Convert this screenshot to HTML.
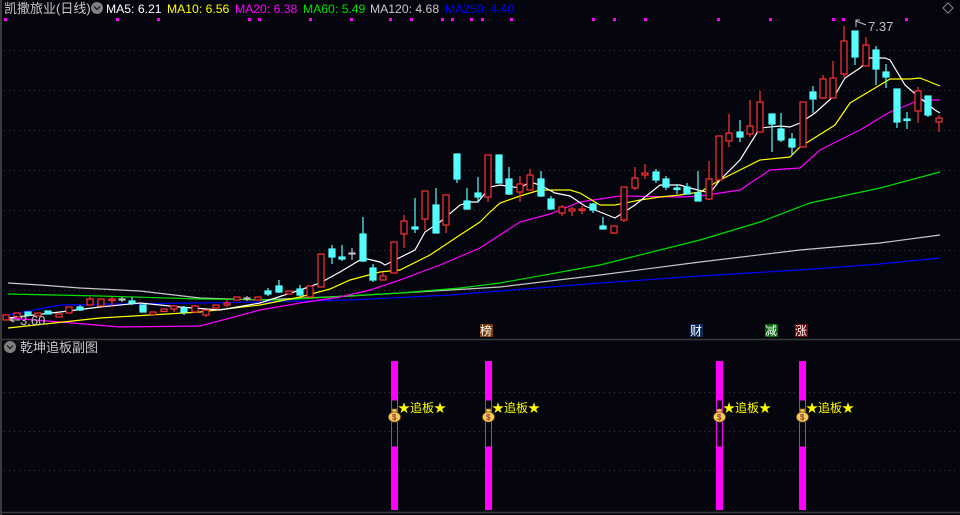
<!DOCTYPE html>
<html><head><meta charset="utf-8"><style>
html,body{margin:0;padding:0;background:#05050e;width:960px;height:515px;overflow:hidden}
svg{display:block}
text{font-family:"Liberation Sans","Noto Sans CJK SC",sans-serif}
</style></head><body>
<svg width="960" height="515" viewBox="0 0 960 515" xmlns="http://www.w3.org/2000/svg">
<rect width="960" height="515" fill="#05050e"/>
<line x1="1" y1="0" x2="1" y2="515" stroke="#3a3a3a" stroke-width="2"/>
<g stroke="#3c3c3c" stroke-dasharray="1,4" stroke-width="1">
<line x1="4" y1="50.5" x2="955" y2="50.5"/><line x1="4" y1="90.5" x2="955" y2="90.5"/><line x1="4" y1="130.5" x2="955" y2="130.5"/><line x1="4" y1="170.5" x2="955" y2="170.5"/><line x1="4" y1="210.5" x2="955" y2="210.5"/><line x1="4" y1="250.5" x2="955" y2="250.5"/><line x1="4" y1="290.5" x2="955" y2="290.5"/>
<line x1="4" y1="392.5" x2="955" y2="392.5"/><line x1="4" y1="431.5" x2="955" y2="431.5"/><line x1="4" y1="470.5" x2="955" y2="470.5"/>
</g>
<line x1="0" y1="339.5" x2="960" y2="339.5" stroke="#3a3a3a" stroke-width="1.5"/>
<line x1="0" y1="512.5" x2="960" y2="512.5" stroke="#3a3a3a" stroke-width="1.5"/>

<text x="4" y="13" font-size="13" fill="#c8c8c8">凯撒旅业(日线)</text>
<circle cx="97" cy="8" r="6" fill="#808080"/><path d="M94 6.5 L97 9.5 L100 6.5" stroke="#222" stroke-width="1.5" fill="none"/>
<text y="13" font-size="12.2"><tspan x="106" fill="#ffffff">MA5: 6.21</tspan><tspan x="167" fill="#ffff00">MA10: 6.56</tspan><tspan x="235" fill="#ff00ff">MA20: 6.38</tspan><tspan x="303" fill="#00e000">MA60: 5.49</tspan><tspan x="370" fill="#c8c8c8">MA120: 4.68</tspan><tspan x="445" fill="#0000ff">MA250: 4.40</tspan></text>
<path d="M948 3 L953 8 L948 13 L943 8 Z" stroke="#888" fill="none"/>

<g fill="#ff00ff">
<rect x="4" y="18" width="3" height="3"/><rect x="116" y="18" width="3" height="3"/><rect x="157" y="18" width="3" height="3"/><rect x="248" y="18" width="3" height="3"/><rect x="258" y="18" width="3" height="3"/><rect x="309" y="18" width="3" height="3"/><rect x="350" y="18" width="3" height="3"/><rect x="389" y="18" width="3" height="3"/><rect x="410" y="18" width="3" height="3"/><rect x="441" y="18" width="3" height="3"/><rect x="451" y="18" width="3" height="3"/><rect x="470" y="18" width="3" height="3"/><rect x="481" y="18" width="3" height="3"/><rect x="510" y="18" width="3" height="3"/><rect x="592" y="18" width="3" height="3"/><rect x="613" y="18" width="3" height="3"/><rect x="644" y="18" width="3" height="3"/><rect x="717" y="18" width="3" height="3"/><rect x="769" y="18" width="3" height="3"/><rect x="832" y="18" width="3" height="3"/><rect x="842" y="18" width="3" height="3"/><rect x="905" y="18" width="3" height="3"/>
</g>

<g fill="none" stroke-width="1.2">
<polyline stroke="#0000ff" points="8,315 60,305 120,304 200,303 260,302 350,300 450,295 600,283 700,276 800,270 880,264 940,258"/>
<polyline stroke="#c8c8c8" points="8,283 40,285 80,288 140,291 200,298 260,300 350,296 400,293 500,287 600,275 700,262 800,250 880,243 940,235"/>
<polyline stroke="#00e000" points="8,294 100,296 200,299 280,300 330,297 400,293 460,288 500,283 600,265 700,240 760,222 810,203 880,188 940,172"/>
<polyline stroke="#ff00ff" points="8,318 60,322 120,327 200,326 260,310 300,303 340,297 370,290 400,280 440,265 480,248 520,222 550,214 580,202 620,196 680,197 700,196 740,190 770,170 800,168 820,150 860,130 890,112 900,108 920,100 940,100"/>
<polyline stroke="#ffff00" points="8,328 100,318 200,312 260,305 300,297 330,289 350,280 380,272 400,270 430,255 460,235 480,222 490,212 500,203 520,196 540,190 570,190 580,193 600,205 615,205 640,200 660,197 680,195 700,192 720,180 760,160 790,157 800,147 835,125 850,103 870,91 890,79 910,79 920,78 940,86"/>
<polyline stroke="#ffffff" points="8,318 60,312 100,307 140,303 180,307 220,310 260,303 300,290 320,283 340,272 360,260 363,258 380,262 385,265 395,260 415,250 425,232 440,222 460,205 470,202 478,202 490,187 500,185 520,188 530,182 540,185 555,193 570,196 585,206 600,212 615,218 635,205 660,185 680,185 690,188 710,193 720,180 740,160 760,128 780,126 790,127 800,123 815,113 835,95 845,78 860,68 870,58 885,58 890,60 905,85 920,98 935,110 940,113"/>
</g>

<g stroke-width="1.2">
<g stroke="#ff3232" fill="#05050e">
<rect x="3" y="315" width="6" height="5"/>
<rect x="14" y="313" width="6" height="4"/>
<rect x="35" y="313" width="6" height="3"/>
<rect x="56" y="314" width="6" height="3"/>
<rect x="66" y="307" width="6" height="6"/>
<line x1="90" y1="297" x2="90" y2="305"/><rect x="87" y="299" width="6" height="6"/>
<rect x="98" y="299" width="6" height="7"/>
<line x1="112" y1="297" x2="112" y2="307"/><rect x="109" y="299" width="6" height="1.5"/>
<rect x="150" y="312" width="6" height="2.5"/>
<rect x="161" y="309" width="6" height="2.5"/>
<line x1="174" y1="305" x2="174" y2="312"/><rect x="171" y="306" width="6" height="3"/>
<line x1="195" y1="305" x2="195" y2="313"/><rect x="192" y="306" width="6" height="6"/>
<line x1="206" y1="310" x2="206" y2="317"/><rect x="203" y="310" width="6" height="5"/>
<rect x="213" y="305" width="6" height="3"/>
<line x1="227" y1="300" x2="227" y2="307"/><rect x="224" y="303" width="6" height="2"/>
<rect x="234" y="297" width="6" height="3"/>
<rect x="255" y="297" width="6" height="3"/>
<rect x="286" y="291" width="6" height="3"/>
<rect x="307" y="286" width="6" height="11"/>
<rect x="318" y="254" width="6" height="33"/>
<line x1="383" y1="272" x2="383" y2="280"/><rect x="380" y="276" width="6" height="4"/>
<rect x="391" y="242" width="6" height="31"/>
<line x1="404" y1="215" x2="404" y2="248"/><rect x="401" y="221" width="6" height="13"/>
<line x1="425" y1="191" x2="425" y2="230"/><rect x="422" y="191" width="6" height="28"/>
<line x1="446" y1="195" x2="446" y2="233"/><rect x="443" y="195" width="6" height="30"/>
<line x1="488" y1="155" x2="488" y2="202"/><rect x="485" y="155" width="6" height="42"/>
<line x1="520" y1="176" x2="520" y2="202"/><rect x="517" y="184" width="6" height="8"/>
<line x1="530" y1="169" x2="530" y2="190"/><rect x="527" y="175" width="6" height="15"/>
<line x1="562" y1="205" x2="562" y2="216"/><rect x="559" y="207" width="6" height="6"/>
<line x1="572" y1="207" x2="572" y2="216"/><rect x="569" y="209" width="6" height="2"/>
<line x1="582" y1="206" x2="582" y2="214"/><rect x="579" y="209" width="6" height="1.5"/>
<line x1="614" y1="226" x2="614" y2="234"/><rect x="611" y="226" width="6" height="7"/>
<line x1="624" y1="187" x2="624" y2="222"/><rect x="621" y="187" width="6" height="33"/>
<line x1="635" y1="167" x2="635" y2="190"/><rect x="632" y="178" width="6" height="10"/>
<line x1="645" y1="164" x2="645" y2="179"/><rect x="642" y="173" width="6" height="2"/>
<line x1="709" y1="161" x2="709" y2="200"/><rect x="706" y="179" width="6" height="20"/>
<rect x="716" y="136" width="6" height="44"/>
<line x1="729" y1="114" x2="729" y2="147"/><rect x="726" y="133" width="6" height="8"/>
<line x1="750" y1="100" x2="750" y2="137"/><rect x="747" y="126" width="6" height="8"/>
<line x1="760" y1="91" x2="760" y2="132"/><rect x="757" y="102" width="6" height="30"/>
<rect x="800" y="102" width="6" height="45"/>
<line x1="823" y1="75" x2="823" y2="99"/><rect x="820" y="79" width="6" height="19"/>
<line x1="833" y1="61" x2="833" y2="98"/><rect x="830" y="78" width="6" height="20"/>
<line x1="844" y1="26" x2="844" y2="77"/><rect x="841" y="41" width="6" height="33"/>
<line x1="866" y1="37" x2="866" y2="66"/><rect x="863" y="45" width="6" height="21"/>
<line x1="918" y1="87" x2="918" y2="123"/><rect x="915" y="91" width="6" height="20"/>
<line x1="939" y1="115" x2="939" y2="132"/><rect x="936" y="118" width="6" height="4"/>
</g>
<g stroke="#54fcfc" fill="#54fcfc">
<rect x="25" y="312" width="6" height="3"/>
<rect x="45" y="311" width="6" height="3"/>
<line x1="80" y1="305" x2="80" y2="311"/><rect x="77" y="307" width="6" height="3"/>
<line x1="132" y1="297" x2="132" y2="305"/><rect x="129" y="301" width="6" height="2"/>
<rect x="140" y="305" width="6" height="7"/>
<line x1="184" y1="306" x2="184" y2="315"/><rect x="181" y="308" width="6" height="4"/>
<line x1="268" y1="288" x2="268" y2="296"/><rect x="265" y="291" width="6" height="3"/>
<line x1="279" y1="280" x2="279" y2="293"/><rect x="276" y="286" width="6" height="6"/>
<line x1="300" y1="285" x2="300" y2="296"/><rect x="297" y="289" width="6" height="6"/>
<line x1="332" y1="245" x2="332" y2="264"/><rect x="329" y="249" width="6" height="8"/>
<line x1="342" y1="245" x2="342" y2="261"/><rect x="339" y="257" width="6" height="2"/>
<line x1="363" y1="217" x2="363" y2="262"/><rect x="360" y="234" width="6" height="27"/>
<line x1="373" y1="264" x2="373" y2="282"/><rect x="370" y="268" width="6" height="12"/>
<line x1="415" y1="198" x2="415" y2="233"/><rect x="412" y="227" width="6" height="2"/>
<line x1="436" y1="188" x2="436" y2="233"/><rect x="433" y="205" width="6" height="28"/>
<line x1="457" y1="154" x2="457" y2="183"/><rect x="454" y="154" width="6" height="25"/>
<line x1="467" y1="188" x2="467" y2="210"/><rect x="464" y="201" width="6" height="8"/>
<line x1="478" y1="177" x2="478" y2="202"/><rect x="475" y="193" width="6" height="4"/>
<rect x="496" y="155" width="6" height="28"/>
<line x1="509" y1="167" x2="509" y2="195"/><rect x="506" y="179" width="6" height="15"/>
<line x1="541" y1="171" x2="541" y2="197"/><rect x="538" y="179" width="6" height="17"/>
<line x1="551" y1="196" x2="551" y2="210"/><rect x="548" y="199" width="6" height="10"/>
<line x1="593" y1="203" x2="593" y2="213"/><rect x="590" y="204" width="6" height="6"/>
<line x1="603" y1="217" x2="603" y2="229"/><rect x="600" y="226" width="6" height="3"/>
<line x1="656" y1="169" x2="656" y2="183"/><rect x="653" y="172" width="6" height="8"/>
<line x1="666" y1="176" x2="666" y2="190"/><rect x="663" y="179" width="6" height="8"/>
<line x1="677" y1="184" x2="677" y2="194"/><rect x="674" y="188" width="6" height="1.5"/>
<line x1="687" y1="183" x2="687" y2="194"/><rect x="684" y="187" width="6" height="7"/>
<line x1="698" y1="171" x2="698" y2="201"/><rect x="695" y="193" width="6" height="8"/>
<line x1="740" y1="120" x2="740" y2="142"/><rect x="737" y="132" width="6" height="5"/>
<line x1="772" y1="114" x2="772" y2="152"/><rect x="769" y="114" width="6" height="10"/>
<line x1="781" y1="113" x2="781" y2="142"/><rect x="778" y="129" width="6" height="11"/>
<line x1="792" y1="133" x2="792" y2="155"/><rect x="789" y="139" width="6" height="8"/>
<line x1="813" y1="86" x2="813" y2="113"/><rect x="810" y="92" width="6" height="7"/>
<line x1="855" y1="31" x2="855" y2="65"/><rect x="852" y="31" width="6" height="26"/>
<line x1="876" y1="46" x2="876" y2="85"/><rect x="873" y="50" width="6" height="19"/>
<line x1="886" y1="64" x2="886" y2="88"/><rect x="883" y="72" width="6" height="5"/>
<line x1="897" y1="89" x2="897" y2="128"/><rect x="894" y="89" width="6" height="33"/>
<line x1="907" y1="112" x2="907" y2="129"/><rect x="904" y="119" width="6" height="1.5"/>
<line x1="928" y1="96" x2="928" y2="117"/><rect x="925" y="96" width="6" height="19"/>
</g>
<g stroke="#c0c0c0" fill="#c0c0c0">
<line x1="122" y1="297" x2="122" y2="302"/><rect x="119" y="299" width="6" height="1"/>
<line x1="247" y1="296" x2="247" y2="301"/><rect x="244" y="298" width="6" height="1"/>
<line x1="352" y1="248" x2="352" y2="260"/><rect x="349" y="253" width="6" height="1"/>
</g>
</g>

<path d="M856 27 L856 20 L860 20 M856 21 L866 25" stroke="#c0c0c0" fill="none"/>
<text x="868" y="31" font-size="13" fill="#c0c0c0">7.37</text>
<path d="M17 316 L10 320 L14 322 M10 320 L20 320" stroke="#c0c0c0" fill="none"/>
<text x="20" y="325" font-size="13" fill="#c0c0c0">3.60</text>

<rect x="480" y="324" width="13" height="13" fill="#7a3a0a"/><text x="480" y="335" font-size="12" fill="#fff">榜</text>
<rect x="690" y="324" width="13" height="13" fill="#0a2a5a"/><text x="690" y="335" font-size="12" fill="#fff">财</text>
<rect x="765" y="324" width="13" height="13" fill="#0a6a0a"/><text x="765" y="335" font-size="12" fill="#fff">减</text>
<rect x="795" y="324" width="13" height="13" fill="#6a0a0a"/><text x="795" y="335" font-size="12" fill="#fff">涨</text>

<circle cx="10" cy="347" r="6" fill="#808080"/><path d="M7 345.5 L10 348.5 L13 345.5" stroke="#222" stroke-width="1.5" fill="none"/>
<text x="20" y="352" font-size="13" fill="#c8c8c8">乾坤追板副图</text>

<g>
<g fill="#ff00ff">
<rect x="391" y="361" width="7" height="39"/><rect x="391" y="447" width="7" height="63"/>
<rect x="485" y="361" width="7" height="39"/><rect x="485" y="447" width="7" height="63"/>
<rect x="716" y="361" width="7" height="39"/><rect x="716" y="447" width="7" height="63"/>
<rect x="799" y="361" width="7" height="39"/><rect x="799" y="447" width="7" height="63"/>
</g>
<g fill="none" stroke="#ff00ff" stroke-width="1">
<rect x="391.5" y="400" width="6" height="47"/><rect x="485.5" y="400" width="6" height="47"/><rect x="716.5" y="400" width="6" height="47"/><rect x="799.5" y="400" width="6" height="47"/>
</g>
<g fill="#f0d060" stroke="#8a5a10" stroke-width="0.8">
<ellipse cx="394.5" cy="417" rx="6" ry="5"/><ellipse cx="488.5" cy="417" rx="6" ry="5"/><ellipse cx="719.5" cy="417" rx="6" ry="5"/><ellipse cx="802.5" cy="417" rx="6" ry="5"/>
<rect x="392" y="409" width="5" height="3"/><rect x="486" y="409" width="5" height="3"/><rect x="717" y="409" width="5" height="3"/><rect x="800" y="409" width="5" height="3"/>
</g>
<g font-size="8" fill="#a03030" font-weight="bold">
<text x="392" y="420">$</text><text x="486" y="420">$</text><text x="717" y="420">$</text><text x="800" y="420">$</text>
</g>
<g font-size="12" fill="#ffff00">
<text x="398" y="412">★追板★</text><text x="492" y="412">★追板★</text><text x="723" y="412">★追板★</text><text x="806" y="412">★追板★</text>
</g>
</g>
</svg>
</body></html>
